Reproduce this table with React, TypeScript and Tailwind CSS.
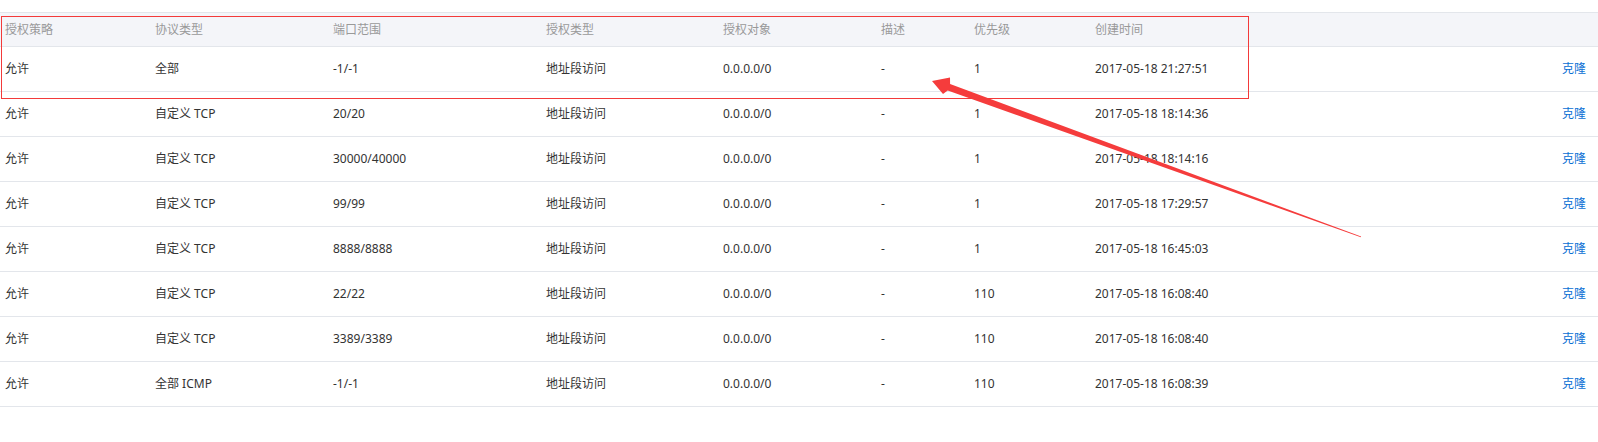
import React from 'react';

/** ------------------------------------------------
 *  Data
 *  ------------------------------------------------ */
const headers = ['授权策略', '协议类型', '端口范围', '授权类型', '授权对象', '描述', '优先级', '创建时间', ''];

const rows = [
  ['允许', '全部', '-1/-1', '地址段访问', '0.0.0.0/0', '-', '1', '2017-05-18 21:27:51'],
  ['允许', '自定义 TCP', '20/20', '地址段访问', '0.0.0.0/0', '-', '1', '2017-05-18 18:14:36'],
  ['允许', '自定义 TCP', '30000/40000', '地址段访问', '0.0.0.0/0', '-', '1', '2017-05-18 18:14:16'],
  ['允许', '自定义 TCP', '99/99', '地址段访问', '0.0.0.0/0', '-', '1', '2017-05-18 17:29:57'],
  ['允许', '自定义 TCP', '8888/8888', '地址段访问', '0.0.0.0/0', '-', '1', '2017-05-18 16:45:03'],
  ['允许', '自定义 TCP', '22/22', '地址段访问', '0.0.0.0/0', '-', '110', '2017-05-18 16:08:40'],
  ['允许', '自定义 TCP', '3389/3389', '地址段访问', '0.0.0.0/0', '-', '110', '2017-05-18 16:08:40'],
  ['允许', '全部 ICMP', '-1/-1', '地址段访问', '0.0.0.0/0', '-', '110', '2017-05-18 16:08:39'],
];

const cols = 'grid grid-cols-[150px_178px_213px_177px_158px_93px_121px_1fr_120px]';

/** ------------------------------------------------
 *  Annotation overlay (red box + arrow)
 *  ------------------------------------------------ */
function Annotation() {
  return (
    <svg className="pointer-events-none absolute inset-0" width="1598" height="442">
      <rect x="1.5" y="16.5" width="1247" height="82" fill="none" stroke="#f33a3a" strokeWidth="1" />
      <polygon
        points="932,81 950,77.5 950.1,83.9 1361.1,236.6 1360.9,237.3 947.7,90.5 943,94"
        fill="#f53c3c"
      />
    </svg>
  );
}

/** ------------------------------------------------
 *  Page
 *  ------------------------------------------------ */
export default function App() {
  return (
    <main
      className="relative h-[442px] w-[1598px] overflow-hidden bg-white pt-[12px] text-[12px]"
      style={{ fontFamily: '"Noto Sans", "Noto Sans CJK SC", sans-serif' }}
    >
      <div className="border-t border-[#e3e6eb]">
        <div className={`${cols} h-[34px] items-center border-b border-[#e3e6eb] bg-[#f4f5f9] text-[#999]`}>
          {headers.map((h, i) => (
            <div key={`h-${i}`} className="pl-[5px]">
              {h}
            </div>
          ))}
        </div>

        {rows.map((r, ri) => (
          <div key={`r-${ri}`} className={`${cols} h-[45px] items-center border-b border-[#e3e6eb] text-[#333]`}>
            {r.map((c, ci) => (
              <div key={`c-${ci}`} className="pl-[5px]">
                {c}
              </div>
            ))}
            <div className="pr-[12px] text-right text-[#0a6fd4]">克隆</div>
          </div>
        ))}
      </div>

      <Annotation />
    </main>
  );
}
